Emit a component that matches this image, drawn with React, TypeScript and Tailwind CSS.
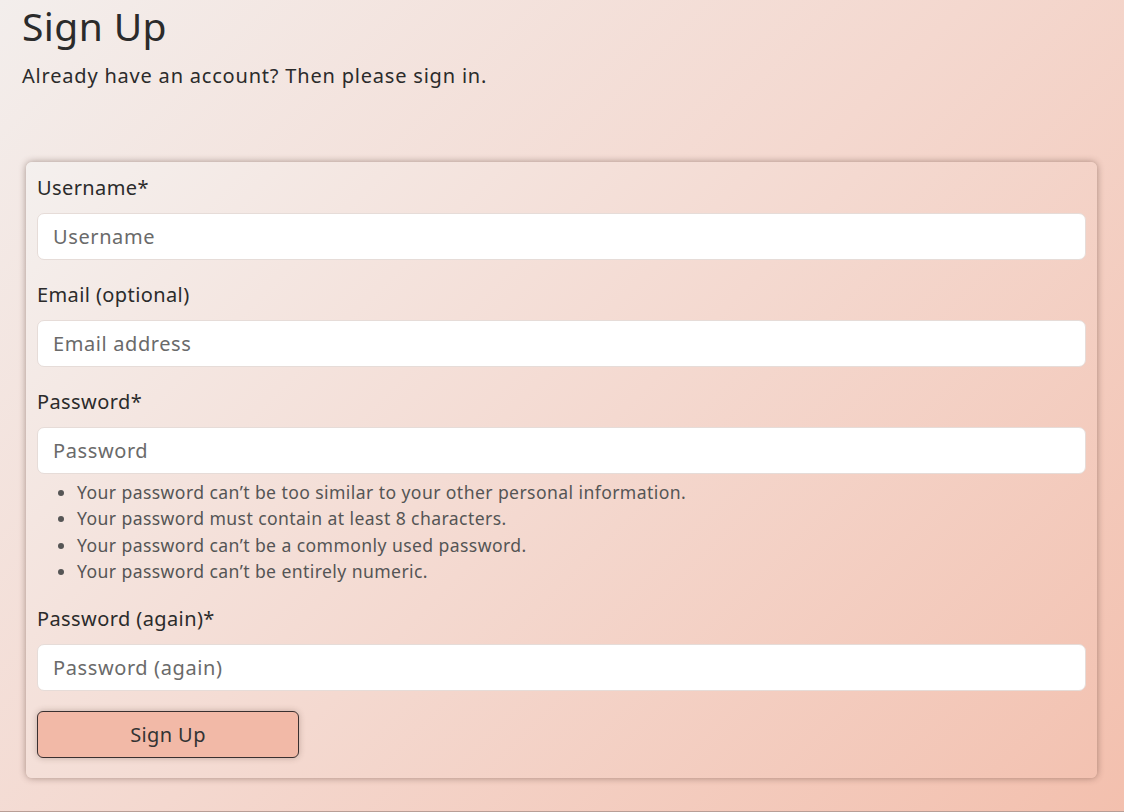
import React from "react";

const fields = [
  { label: "Username*", placeholder: "Username" },
  { label: "Email (optional)", placeholder: "Email address" },
  { label: "Password*", placeholder: "Password" },
];

const rules = [
  "Your password can\u2019t be too similar to your other personal information.",
  "Your password must contain at least 8 characters.",
  "Your password can\u2019t be a commonly used password.",
  "Your password can\u2019t be entirely numeric.",
];

function Field({ label, placeholder }: { label: string; placeholder: string }) {
  return (
    <div className="flex flex-col">
      <label className="text-[20px] leading-[28px] tracking-[0.02em] text-[#2b2b2b] mb-[11px]">{label}</label>
      <input
        placeholder={placeholder}
        className="h-[47px] w-full rounded-[7px] border border-[#e6dcd8] bg-white px-[15px] text-[20px] tracking-[0.03em] text-[#333] placeholder:text-[#6a6a6a] outline-none"
      />
    </div>
  );
}

export default function App() {
  return (
    <div
      className="h-[812px] w-full overflow-hidden flex flex-col bg-[linear-gradient(135deg,#f3eeec_0%,#f4d8cf_50%,#f3c0ae_100%)]"
      style={{ fontFamily: '"Noto Sans", "Open Sans", sans-serif' }}
    >
      <div className="pl-[22px] pt-[2px]">
        <h1 className="text-[39px] leading-[48px] tracking-[0.01em] text-[#2b2b2b]">Sign Up</h1>
        <p className="mt-[11px] text-[20px] leading-[30px] tracking-[0.04em] text-[#2b2b2b]">
          Already have an account? Then please sign in.
        </p>
      </div>
      <div className="ml-[26px] mr-[27px] mt-[71px] rounded-[6px] shadow-[0_0_7px_rgba(70,40,30,0.45)] bg-[linear-gradient(135deg,#f4f0ee_0%,#f4d9d0_50%,#f3c2b1_100%)] px-[11px] pt-[12px] pb-[20px]">
        <div className="flex flex-col gap-[21px]">
          {fields.slice(0, 2).map((f) => (
            <Field key={f.label} {...f} />
          ))}
          <div className="flex flex-col">
            <Field {...fields[2]} />
            <ul className="mt-[5px] list-disc pl-[40px] text-[17.6px] leading-[26.3px] tracking-[0.023em] text-[#555] marker:text-[#555]">
              {rules.map((r) => (
                <li key={r}>{r}</li>
              ))}
            </ul>
          </div>
          <Field label="Password (again)*" placeholder="Password (again)" />
        </div>
        <button className="mt-[20px] h-[47px] w-[262px] rounded-[6px] border border-[#3a3030] bg-[#f2b9a7] text-[20px] tracking-[0.02em] text-[#333] shadow-[0_0_6px_rgba(80,50,40,0.3)]">
          Sign Up
        </button>
      </div>
      <div className="mt-[33px] h-px bg-[#b89e96]" />
    </div>
  );
}
